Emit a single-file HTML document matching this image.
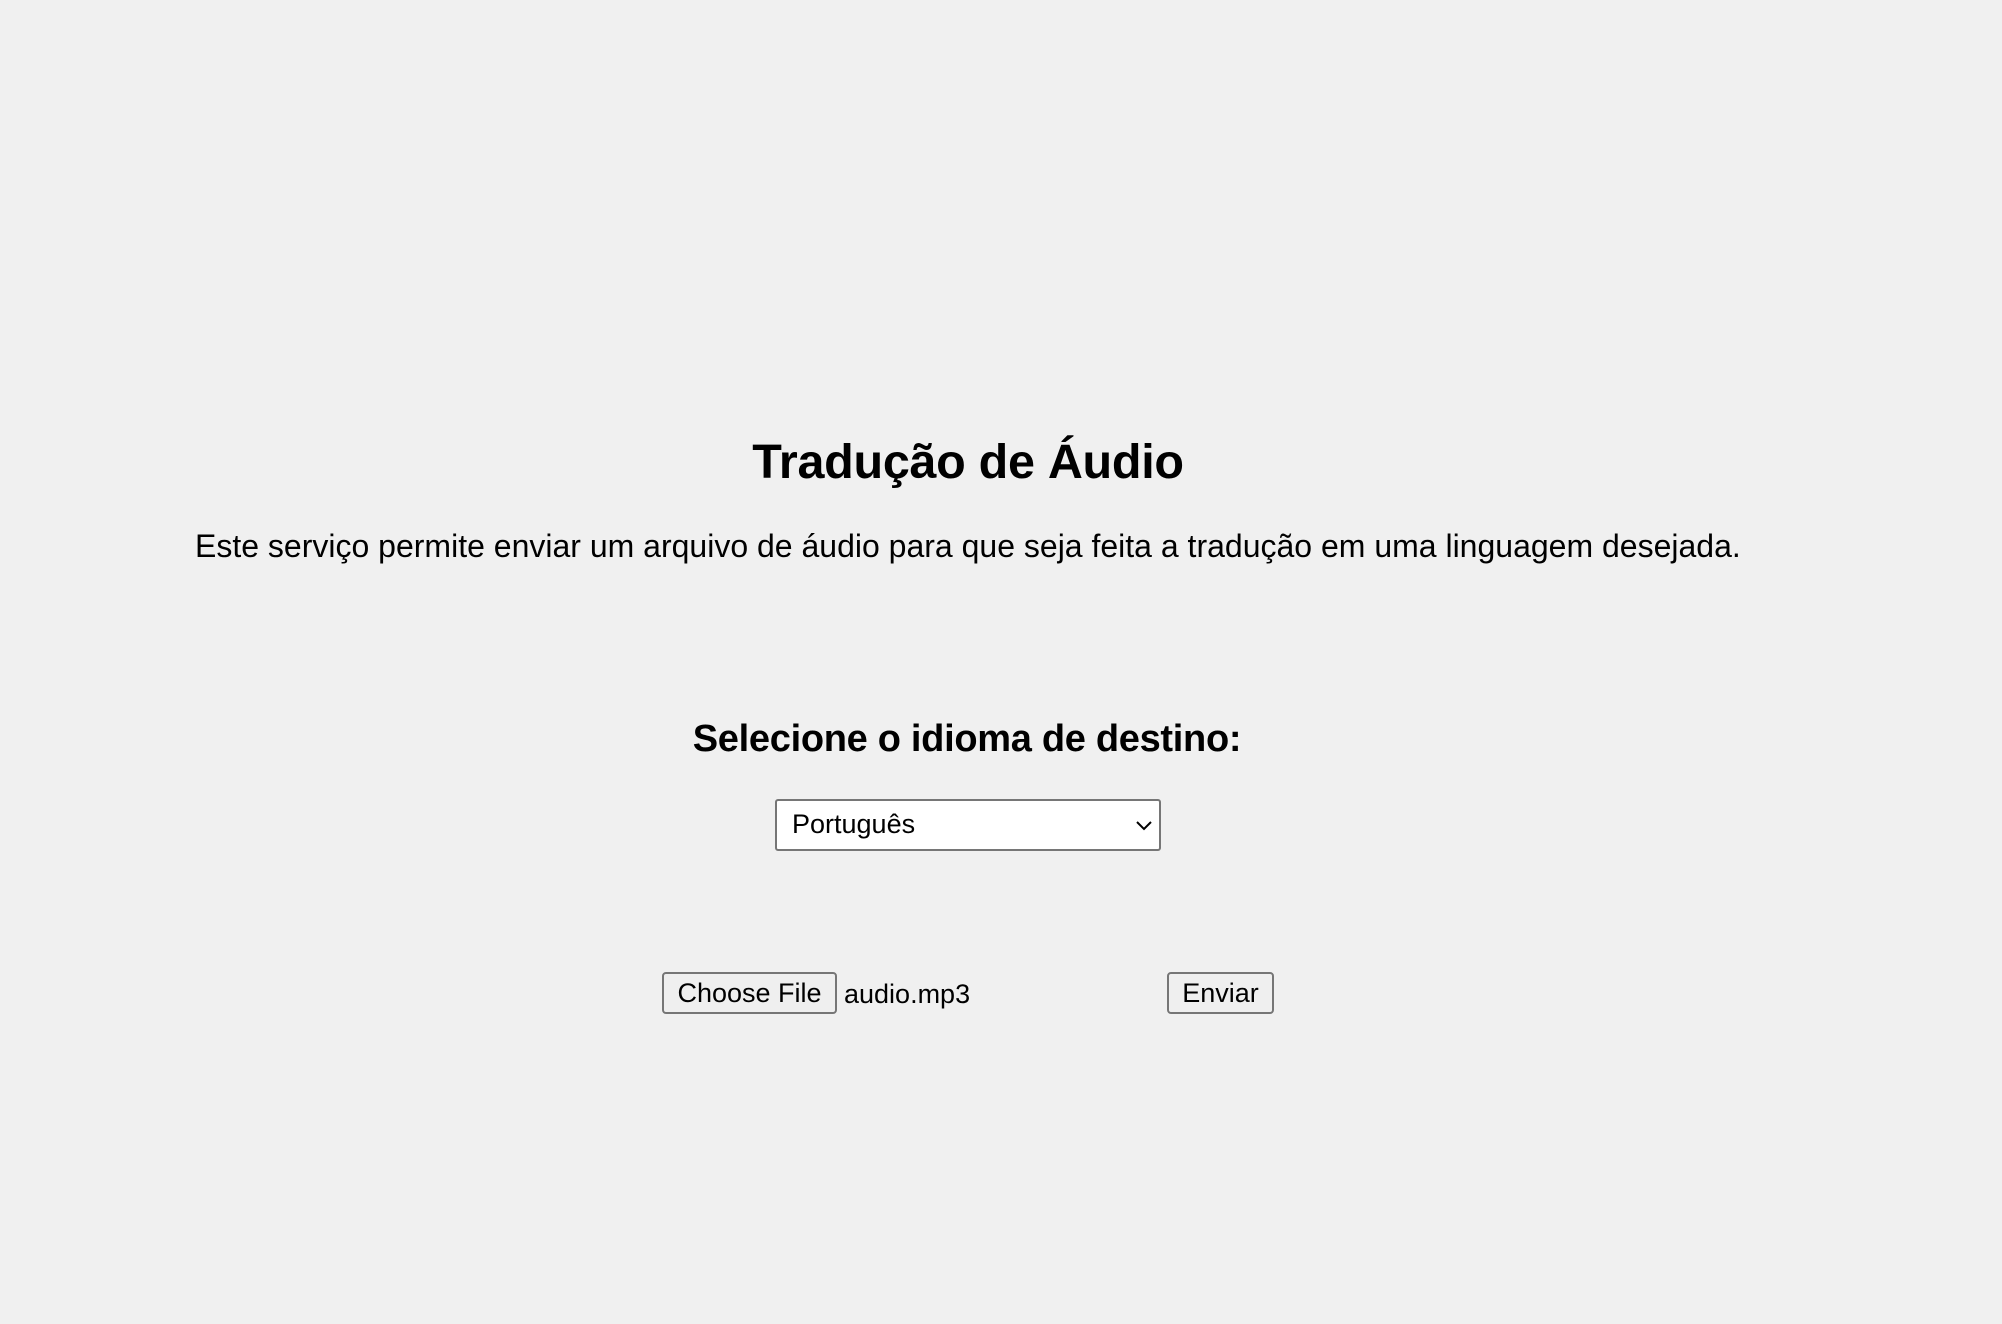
<!DOCTYPE html>
<html><head><meta charset="utf-8"><style>
html,body{margin:0;padding:0;background:#f0f0f0;width:2002px;height:1324px;overflow:hidden;font-family:"Liberation Sans",Arial,sans-serif;color:#000}
.a{position:absolute;white-space:nowrap;line-height:1}
.btn{position:absolute;box-sizing:border-box;border:2px solid #767676;border-radius:4px;background:#efefef;font-size:27px;display:flex;align-items:center;justify-content:center}
</style></head><body>
<div class="a" style="left:0;width:1936px;text-align:center;top:438px;font-size:48.5px;font-weight:bold;letter-spacing:-0.3px">Tradução de Áudio</div>
<div class="a" style="left:195px;top:530px;font-size:32px">Este serviço permite enviar um arquivo de áudio para que seja feita a tradução em uma linguagem desejada.</div>
<div class="a" style="left:687px;width:560px;text-align:center;top:720px;font-size:38px;font-weight:bold;letter-spacing:-0.3px">Selecione o idioma de destino:</div>
<div style="position:absolute;left:775px;top:799px;width:386px;height:52px;box-sizing:border-box;border:2px solid #767676;border-radius:3px;background:#fff"></div>
<div class="a" style="left:792px;top:811px;font-size:27px">Português</div>
<svg style="position:absolute;left:1135px;top:818px" width="18" height="14" viewBox="0 0 18 14"><path d="M2 4 L9 11 L16 4" fill="none" stroke="#000" stroke-width="2"/></svg>
<div class="btn" style="left:662px;top:972px;width:175px;height:42px">Choose File</div>
<div class="a" style="left:844px;top:981px;font-size:27px">audio.mp3</div>
<div class="btn" style="left:1167px;top:972px;width:107px;height:42px">Enviar</div>
</body></html>
